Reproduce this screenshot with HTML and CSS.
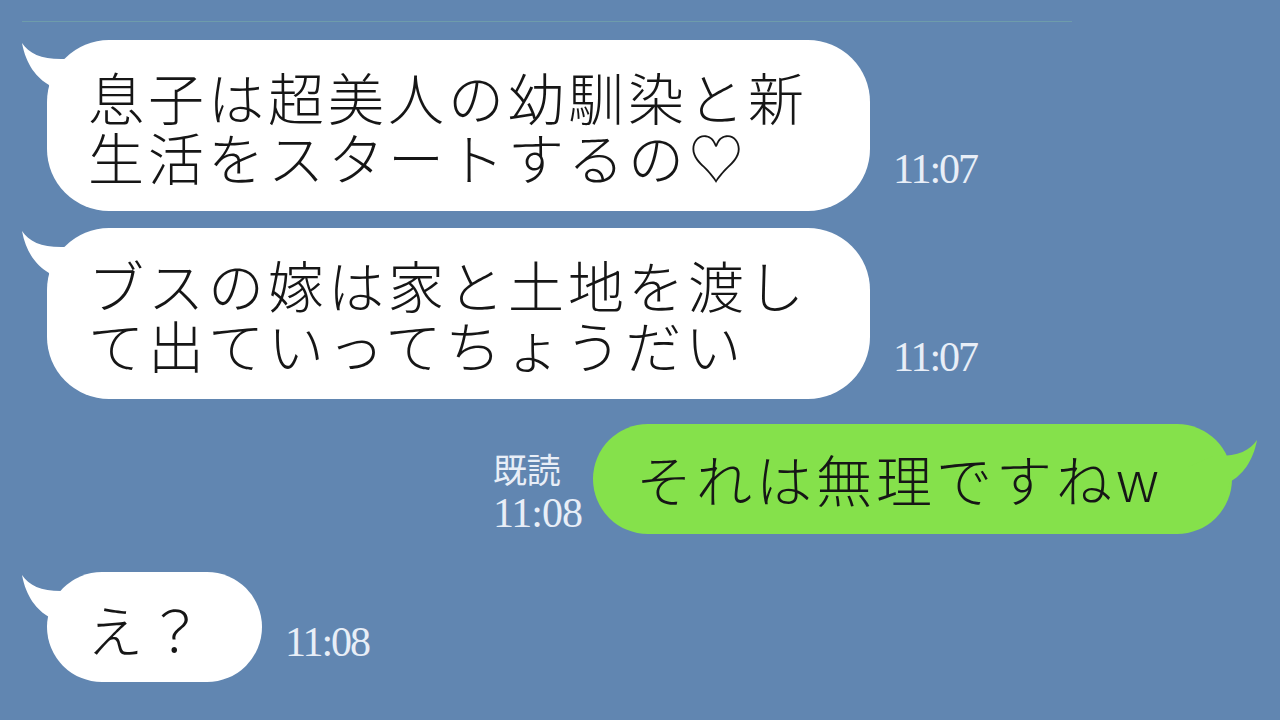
FILE: index.html
```html
<!DOCTYPE html>
<html lang="ja">
<head>
<meta charset="utf-8">
<link rel="stylesheet" href="styles.css">
</head>
<body>
<div class="screen">
  <div class="divider"></div>
  <div class="chat">
    <div class="row in first">
      <div class="bubble white tall">
        <svg class="tail left" viewBox="0 0 70 70" width="70" height="70"><path d="M1 3 C 8 14, 22 20, 45 19 L 70 30 L 70 70 L 35 70 L 28 45 C 16 38, 5 25, 1 3 Z"/></svg>
        <p class="msg"><span class="line">息子は超美人の幼馴染と新</span><span class="line">生活をスタートするの♡</span></p>
      </div>
      <span class="time">11:07</span>
    </div>
    <div class="row in second">
      <div class="bubble white tall">
        <svg class="tail left" viewBox="0 0 70 70" width="70" height="70"><path d="M1 3 C 8 14, 22 20, 45 19 L 70 30 L 70 70 L 35 70 L 28 45 C 16 38, 5 25, 1 3 Z"/></svg>
        <p class="msg"><span class="line">ブスの嫁は家と土地を渡し</span><span class="line">て出ていってちょうだい</span></p>
      </div>
      <span class="time">11:07</span>
    </div>
    <div class="row out">
      <div class="read">
        <span class="read-label">既読</span>
        <span class="time read-time">11:08</span>
      </div>
      <div class="bubble green">
        <svg class="tail right" viewBox="0 0 70 70" width="70" height="70"><path d="M1 3 C 8 14, 22 20, 45 19 L 70 30 L 70 70 L 35 70 L 28 45 C 16 38, 5 25, 1 3 Z"/></svg>
        <p class="msg"><span class="line">それは無理ですねw</span></p>
      </div>
    </div>
    <div class="row in last">
      <div class="bubble white short">
        <svg class="tail left" viewBox="0 0 70 70" width="70" height="70"><path d="M1 3 C 8 14, 22 20, 45 19 L 70 30 L 70 70 L 35 70 L 28 45 C 16 38, 5 25, 1 3 Z"/></svg>
        <p class="msg"><span class="line">え？</span></p>
      </div>
      <span class="time">11:08</span>
    </div>
  </div>
</div>
</body>
</html>
```
FILE: styles.css
```css
html, body {
  margin: 0;
  padding: 0;
}
body {
  background: #6186b1;
  width: 1280px;
  height: 720px;
  overflow: hidden;
}
.screen {
  width: 1280px;
  height: 720px;
  padding-top: 21px;
  box-sizing: border-box;
}
.divider {
  margin-left: 22px;
  width: 1050px;
  height: 1px;
  background: #6e9cab;
}
.chat {
  display: flex;
  flex-direction: column;
}
.row {
  display: flex;
  align-items: flex-end;
}
.row.in {
  padding-left: 47px;
  gap: 23px;
}
.row.first { margin-top: 18px; }
.row.second { margin-top: 17px; }
.row.out {
  justify-content: flex-end;
  padding-right: 48px;
  gap: 11px;
  margin-top: 25px;
}
.row.last { margin-top: 38px; }

.bubble {
  position: relative;
  box-sizing: border-box;
}
.bubble.white { background: #ffffff; fill: #ffffff; }
.bubble.green { background: #85e14b; fill: #85e14b; }
.bubble.tall {
  width: 823px;
  height: 171px;
  border-radius: 62px;
  padding: 26px 0 0 41px;
}
.bubble.green {
  width: 639px;
  height: 110px;
  border-radius: 55px;
  padding: 24px 0 0 43px;
}
.bubble.short {
  width: 215px;
  height: 110px;
  border-radius: 55px;
  padding: 26px 0 0 40px;
}
.msg {
  position: relative;
  margin: 0;
  display: flex;
  flex-direction: column;
  font-family: "Noto Sans CJK JP", sans-serif;
  font-weight: 300;
  font-size: 56px;
  letter-spacing: 4px;
  color: #161616;
  white-space: nowrap;
}
.line {
  display: block;
  height: 60px;
  line-height: 60px;
}
.tail {
  position: absolute;
  display: block;
}
.tail.left {
  left: -26px;
  top: 0;
}
.tail.right {
  right: -26px;
  top: 13px;
  transform: scaleX(-1);
}
.time {
  font-family: "Liberation Serif", "Times New Roman", serif;
  font-size: 42px;
  line-height: 38px;
  letter-spacing: -2px;
  color: #e8eef7;
  margin-bottom: 23px;
}
.row.last .time { margin-bottom: 21px; }
.read {
  display: flex;
  flex-direction: column;
  align-items: flex-start;
  margin-bottom: 2px;
}
.read-label {
  font-family: "Noto Sans CJK JP", sans-serif;
  font-size: 34px;
  line-height: 40px;
  color: #e8eef7;
}
.read-time {
  margin: 5px 0 0 0;
  letter-spacing: -1px;
}
```
